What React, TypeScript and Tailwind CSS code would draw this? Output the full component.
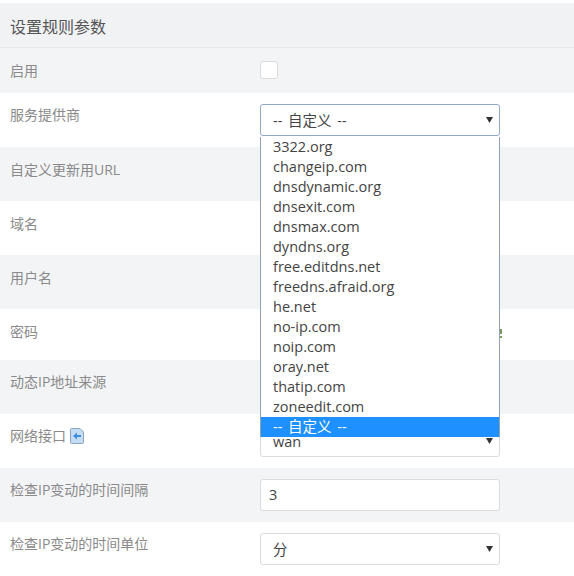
const providers = [
  "3322.org",
  "changeip.com",
  "dnsdynamic.org",
  "dnsexit.com",
  "dnsmax.com",
  "dyndns.org",
  "free.editdns.net",
  "freedns.afraid.org",
  "he.net",
  "no-ip.com",
  "noip.com",
  "oray.net",
  "thatip.com",
  "zoneedit.com",
]

function Arrow() {
  return (
    <svg className="absolute right-[6px] top-[12px] h-[6px] w-[7px]" viewBox="0 0 7 6">
      <path d="M0 0h7L3.5 6z" fill="#333" />
    </svg>
  )
}

function Select({ value, focus }: { value: string; focus?: boolean }) {
  return (
    <div
      className={
        "relative h-[32px] w-[240px] rounded-[3px] border bg-white pl-[12px] text-[14.5px] leading-[31px] text-[#444] [word-spacing:2px] " +
        (focus ? "border-[#8fa9c9]" : "border-[#dcdcdc]")
      }
    >
      {value}
      <Arrow />
    </div>
  )
}

function Row({
  label,
  odd,
  tight,
  height,
  children,
}: {
  label: React.ReactNode
  odd?: boolean
  tight?: boolean
  height: string
  children?: React.ReactNode
}) {
  return (
    <div className={"flex " + height + " " + (odd ? "bg-[#f3f4f6]" : "bg-white")}>
      <div
        className={
          "w-[260px] pl-[10px] text-[14px] leading-[20px] text-[#8a8a8a] " + (tight ? "pt-[12px]" : "pt-[13px]")
        }
      >
        {label}
      </div>
      <div className="pt-[11px]">{children}</div>
    </div>
  )
}

export default function App() {
  return (
    <div
      className="relative h-[576px] w-[574px] overflow-hidden bg-white"
      style={{ fontFamily: '"Open Sans", "Noto Sans CJK SC", sans-serif' }}
    >
      <div className="mt-[3px] h-[45px] border-b border-[#e8e9ec] bg-[#f1f2f4] pl-[10px] pt-[13px] text-[16px] leading-[22px] text-[#555]">
        设置规则参数
      </div>
      <Row label="启用" odd height="h-[45px]">
        <div className="mt-[2px] h-[18px] w-[18px] rounded-[3px] border border-[#dcdcdc] bg-white" />
      </Row>
      <Row label="服务提供商" tight height="h-[54px]">
        <Select value="-- 自定义 --" focus />
      </Row>
      <Row label="自定义更新用URL" odd height="h-[54px]" />
      <Row label="域名" height="h-[54px]" />
      <Row label="用户名" odd height="h-[54px]" />
      <Row label="密码" height="h-[51px]">
        <svg className="ml-[240px] mt-[9px] h-[10px] w-[3px]" viewBox="0 0 3 10">
          <path d="M0 0h2v5H0zM0 7h2v2H0z" fill="#7a9a5a" />
        </svg>
      </Row>
      <Row label="动态IP地址来源" odd tight height="h-[54px]" />
      <Row
        label={
          <span className="flex items-center gap-[4px]">
            网络接口
            <svg className="h-[16px] w-[14px]" viewBox="0 0 14 16">
              <path d="M.5 1.500a1 1 0 0 1 1-1H10l3.500 3.500v10.500a1 1 0 0 1-1 1h-11a1 1 0 0 1-1-1z" fill="#c4dcf5" stroke="#8fa3b8" />
              <path d="M3 8l4-3.500V7h4v2H7v2.500z" fill="#3f8cdc" />
            </svg>
          </span>
        }
        tight
        height="h-[54px]"
      >
        <Select value="wan" />
      </Row>
      <Row label="检查IP变动的时间间隔" odd tight height="h-[54px]">
        <div className="h-[32px] w-[240px] rounded-[3px] border border-[#dcdcdc] bg-white pl-[8px] text-[14.5px] leading-[30px] text-[#444]">
          3
        </div>
      </Row>
      <Row label="检查IP变动的时间单位" tight height="h-[54px]">
        <Select value="分" />
      </Row>

      {/* open dropdown list */}
      <div className="absolute left-[260px] top-[137px] w-[240px] border-x border-[#8fa0b8] bg-white text-[14.5px] leading-[20px] text-[#444]">
        {providers.map((p) => (
          <div key={p} className="h-[20px] pl-[12px]">
            {p}
          </div>
        ))}
        <div className="h-[20px] bg-[#1e90ff] pl-[12px] text-white [word-spacing:2px]">-- 自定义 --</div>
      </div>
    </div>
  )
}
